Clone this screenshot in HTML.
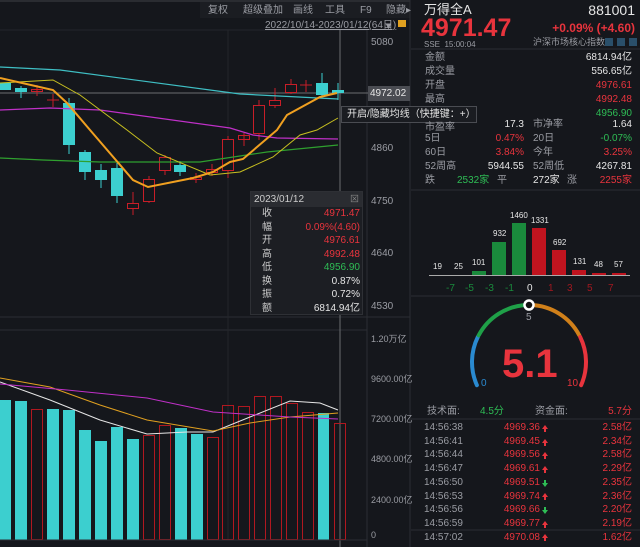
<!DOCTYPE html>
<html><head><meta charset="utf-8"><style>
*{margin:0;padding:0;box-sizing:border-box}
html,body{width:640px;height:547px;overflow:hidden}
body{background:#15171c;position:relative;font-family:"Liberation Sans","Noto Sans CJK SC",sans-serif;color:#ddd}
.a{position:absolute;white-space:nowrap;line-height:12px}
.g{color:#9a9ca3}.r{color:#e8343d}.gr{color:#2ebd55}.w{color:#e6e6e6}
.s10{font-size:10px}.s11{font-size:11px}
.rt{text-align:right}
</style></head><body>
<svg class="a" style="left:0;top:0" width="640" height="547">
<rect x="0" y="0" width="410" height="2" fill="#2a2c31"/>
<rect x="200" y="2" width="210" height="16" fill="#1b1d22"/>
<line x1="0" y1="30" x2="367" y2="30" stroke="#24262b"/>
<line x1="0" y1="317" x2="410" y2="317" stroke="#2c2e33"/>
<line x1="0" y1="330" x2="367" y2="330" stroke="#2c2e33"/>
<line x1="228" y1="30" x2="228" y2="540" stroke="#23252a"/>
<line x1="367" y1="30" x2="367" y2="547" stroke="#2c2e33"/>
<line x1="410" y1="0" x2="410" y2="547" stroke="#2c2e33"/>
<line x1="0" y1="93" x2="368" y2="93" stroke="#6a6c70"/>
<line x1="340" y1="30" x2="340" y2="547" stroke="#6a6c70"/>
<g stroke-width="1">
<rect x="0" y="83" width="11" height="7" fill="#3ccfcf"/>
<line x1="21" y1="86" x2="21" y2="98" stroke="#3ccfcf"/><rect x="15" y="88" width="12" height="4" fill="#3ccfcf"/>
<line x1="37" y1="85" x2="37" y2="96" stroke="#c81e28"/><rect x="31.5" y="89.5" width="11" height="2" fill="none" stroke="#c81e28"/>
<line x1="53" y1="94" x2="53" y2="107" stroke="#c81e28"/><line x1="47" y1="100" x2="59" y2="100" stroke="#c81e28"/>
<line x1="69" y1="98" x2="69" y2="154" stroke="#3ccfcf"/><rect x="63" y="103" width="12" height="42" fill="#3ccfcf"/>
<line x1="85" y1="150" x2="85" y2="180" stroke="#3ccfcf"/><rect x="79" y="152" width="12" height="20" fill="#3ccfcf"/>
<line x1="101" y1="164" x2="101" y2="188" stroke="#3ccfcf"/><rect x="95" y="170" width="12" height="10" fill="#3ccfcf"/>
<line x1="117" y1="163" x2="117" y2="203" stroke="#3ccfcf"/><rect x="111" y="168" width="12" height="28" fill="#3ccfcf"/>
<line x1="133" y1="192" x2="133" y2="215" stroke="#c81e28"/><rect x="127.5" y="203.5" width="11" height="5" fill="#15171c" stroke="#c81e28"/>
<line x1="149" y1="176" x2="149" y2="203" stroke="#c81e28"/><rect x="143.5" y="179.5" width="11" height="22" fill="#15171c" stroke="#c81e28"/>
<line x1="165" y1="155" x2="165" y2="175" stroke="#c81e28"/><rect x="159.5" y="157.5" width="11" height="13" fill="#15171c" stroke="#c81e28"/>
<line x1="180" y1="161" x2="180" y2="176" stroke="#3ccfcf"/><rect x="174" y="165" width="12" height="7" fill="#3ccfcf"/>
<line x1="196" y1="173" x2="196" y2="183" stroke="#c81e28"/><rect x="190.5" y="177.5" width="11" height="2" fill="none" stroke="#c81e28"/>
<line x1="212" y1="164" x2="212" y2="176" stroke="#c81e28"/><rect x="206.5" y="169.5" width="11" height="3" fill="none" stroke="#c81e28"/>
<line x1="228" y1="136" x2="228" y2="178" stroke="#c81e28"/><rect x="222.5" y="139.5" width="11" height="31" fill="#15171c" stroke="#c81e28"/>
<line x1="244" y1="133" x2="244" y2="146" stroke="#c81e28"/><rect x="238.5" y="135.5" width="11" height="4" fill="none" stroke="#c81e28"/>
<line x1="259" y1="100" x2="259" y2="140" stroke="#c81e28"/><rect x="253.5" y="105.5" width="11" height="28" fill="#15171c" stroke="#c81e28"/>
<line x1="275" y1="88" x2="275" y2="108" stroke="#c81e28"/><rect x="269.5" y="100.5" width="11" height="5" fill="#15171c" stroke="#c81e28"/>
<line x1="291" y1="79" x2="291" y2="94" stroke="#c81e28"/><rect x="285.5" y="84.5" width="11" height="8" fill="#15171c" stroke="#c81e28"/>
<line x1="306" y1="80" x2="306" y2="92" stroke="#c81e28"/><line x1="300" y1="85" x2="312" y2="85" stroke="#c81e28"/>
<line x1="322" y1="73" x2="322" y2="97" stroke="#3ccfcf"/><rect x="316" y="83" width="12" height="12" fill="#3ccfcf"/>
<line x1="338" y1="83" x2="338" y2="100" stroke="#3ccfcf"/><rect x="332" y="90" width="12" height="3" fill="#3ccfcf"/>
</g>
<polyline fill="none" stroke="#3fbfc4" stroke-width="1.2" points="0,67 60,70 240,94 338,99"/>
<polyline fill="none" stroke="#c030c8" stroke-width="1.2" points="0,110 50,108 100,110 230,128 253,135 277,138 338,139"/>
<polyline fill="none" stroke="#2fa02f" stroke-width="1.2" points="0,158 43,160 100,162 200,162 267,152 338,145"/>
<polyline fill="none" stroke="#c8c020" stroke-width="1" points="0,83 53,80 80,95 127,130 157,153 210,175 240,172 273,157 300,135 317,130 338,118"/>
<polyline fill="none" stroke="#f0a020" stroke-width="2" points="0,78 53,90 67,103 90,130 133,180 148,187 193,178 213,172 230,162 243,159 277,130 287,115 320,97 337,93"/>
<g fill="#3ccfcf">
<rect x="0" y="400" width="11" height="140"/><rect x="15" y="401" width="12" height="139"/>
<rect x="47" y="409" width="12" height="131"/><rect x="63" y="410" width="12" height="130"/>
<rect x="79" y="430" width="12" height="110"/><rect x="95" y="441" width="12" height="99"/>
<rect x="111" y="427" width="12" height="113"/><rect x="127" y="439" width="12" height="101"/>
<rect x="175" y="428" width="12" height="112"/><rect x="191" y="434" width="12" height="106"/>
<rect x="318" y="413" width="11" height="127"/>
</g>
<g fill="none" stroke="#b01820">
<rect x="31.5" y="409.5" width="11" height="130"/><rect x="143.5" y="435.5" width="11" height="104"/>
<rect x="159.5" y="425.5" width="11" height="114"/><rect x="207.5" y="437.5" width="11" height="102"/>
<rect x="222.5" y="405.5" width="11" height="134"/><rect x="238.5" y="406.5" width="11" height="133"/>
<rect x="254.5" y="396.5" width="11" height="143"/><rect x="270.5" y="396.5" width="11" height="143"/>
<rect x="286.5" y="403.5" width="11" height="136"/><rect x="302.5" y="412.5" width="11" height="127"/>
<rect x="334.5" y="423.5" width="11" height="116"/>
</g>
<polyline fill="none" stroke="#e6e6e6" points="0,382 50,400 100,420 147,434 187,432 213,432 250,417 290,401 320,403 338,410"/>
<polyline fill="none" stroke="#e0a020" points="0,378 50,387 100,405 147,420 213,431 250,423 290,417 338,413"/>
<polyline fill="none" stroke="#c030c8" points="0,384 67,390 147,398 213,412 290,417 338,419"/>
<line x1="0" y1="540" x2="367" y2="540" stroke="#2c2e33"/>
<line x1="411" y1="49" x2="640" y2="49" stroke="#2c2e33"/>
<line x1="411" y1="190" x2="640" y2="190" stroke="#2c2e33"/>
<line x1="411" y1="296" x2="640" y2="296" stroke="#2c2e33"/>
<line x1="411" y1="419" x2="640" y2="419" stroke="#2c2e33"/>
<line x1="411" y1="530" x2="640" y2="530" stroke="#2c2e33"/>
<rect x="472" y="271" width="14" height="4" fill="#1a8a3c"/>
<rect x="492" y="242" width="14" height="33" fill="#1a8a3c"/>
<rect x="512" y="223" width="14" height="52" fill="#1a8a3c"/>
<rect x="532" y="228" width="14" height="47" fill="#c0141f"/>
<rect x="552" y="250" width="14" height="25" fill="#c0141f"/>
<rect x="572" y="270" width="14" height="5" fill="#c0141f"/>
<rect x="592" y="273" width="14" height="2" fill="#c0141f"/>
<rect x="612" y="273" width="14" height="2" fill="#c0141f"/>
<line x1="429" y1="275.5" x2="630" y2="275.5" stroke="#aaa"/>
<g fill="none" stroke-width="4" stroke-linecap="round">
<path d="M476.9,385.2 A57,57 0 0 1 477.8,337" stroke="#2a8ad0"/>
<path d="M478.7,335.3 A57,57 0 0 1 527,305" stroke="#1fa048"/>
<path d="M531,305 A57,57 0 0 1 579.3,335.3" stroke="#d0801a"/>
<path d="M580.2,337 A57,57 0 0 1 581.1,385.2" stroke="#e8343d"/>
</g>
<circle cx="529" cy="305" r="4.5" fill="#111" stroke="#fff" stroke-width="2.5"/>
<g>
<path d="M545,425 l3,4 h-2 v3 h-2 v-3 h-2z" fill="#e8343d"/>
<path d="M545,439 l3,4 h-2 v3 h-2 v-3 h-2z" fill="#e8343d"/>
<path d="M545,452 l3,4 h-2 v3 h-2 v-3 h-2z" fill="#e8343d"/>
<path d="M545,466 l3,4 h-2 v3 h-2 v-3 h-2z" fill="#e8343d"/>
<path d="M545,487 l3,-4 h-2 v-3 h-2 v3 h-2z" fill="#2ebd55"/>
<path d="M545,493 l3,4 h-2 v3 h-2 v-3 h-2z" fill="#e8343d"/>
<path d="M545,514 l3,-4 h-2 v-3 h-2 v3 h-2z" fill="#2ebd55"/>
<path d="M545,521 l3,4 h-2 v3 h-2 v-3 h-2z" fill="#e8343d"/>
<path d="M545,534 l3,4 h-2 v3 h-2 v-3 h-2z" fill="#e8343d"/>
</g>
<rect x="398" y="20" width="8" height="7" fill="#e0a020"/>
<rect x="605" y="38" width="8" height="8" fill="#2a4f6a"/>
<rect x="617" y="38" width="8" height="8" fill="#2a4f6a"/>
<rect x="629" y="38" width="8" height="8" fill="#2a4f6a"/>
</svg>

<div class="a g s10" style="left:208px;top:5px">复权</div>
<div class="a g s10" style="left:243px;top:5px">超级叠加</div>
<div class="a g s10" style="left:293px;top:5px">画线</div>
<div class="a g s10" style="left:325px;top:5px">工具</div>
<div class="a g s10" style="left:360px;top:5px">F9</div>
<div class="a g s10" style="left:386px;top:5px">隐藏▸</div>
<div class="a g s10" style="left:265px;top:20px;text-decoration:underline">2022/10/14-2023/01/12(64日)</div>
<div class="a g" style="left:384px;top:20px;font-size:9px">▼</div>
<div class="a g s10" style="left:371px;top:37px">5080</div>
<div class="a g s10" style="left:371px;top:143px">4860</div>
<div class="a g s10" style="left:371px;top:196px">4750</div>
<div class="a g s10" style="left:371px;top:248px">4640</div>
<div class="a g s10" style="left:371px;top:301px">4530</div>
<div class="a w s10" style="left:368px;top:86px;width:42px;height:15px;background:#4a4c52;padding:2px 2px">4972.02</div>
<div class="a w s10" style="left:341px;top:106px;width:136px;height:17px;background:#1a1c21;border:1px solid #4a4c52;padding:2px 5px">开启/隐藏均线（快捷键：+）</div>
<div class="a g" style="left:371px;top:333px;font-size:9px">1.20万亿</div>
<div class="a g" style="left:371px;top:373px;font-size:9px">9600.00亿</div>
<div class="a g" style="left:371px;top:413px;font-size:9px">7200.00亿</div>
<div class="a g" style="left:371px;top:453px;font-size:9px">4800.00亿</div>
<div class="a g" style="left:371px;top:494px;font-size:9px">2400.00亿</div>
<div class="a g" style="left:371px;top:529px;font-size:9px">0</div>
<div class="a" style="left:250px;top:191px;width:113px;height:124px;background:#1c1e23;border:1px solid #2e3035;white-space:normal;line-height:normal">
<div style="height:15px;background:#2a2c31;font-size:10px;line-height:13px;color:#ccc;padding:1px 3px;position:relative">2023/01/12<span style="position:absolute;right:3px;color:#888;font-size:9px">⊠</span></div>
<div class="s10" style="line-height:13.5px">
<div style="display:flex"><span style="width:32px;text-align:center;color:#ccc">收</span><span class="r" style="flex:1;text-align:right;padding-right:2px">4971.47</span></div>
<div style="display:flex"><span style="width:32px;text-align:center;color:#ccc">幅</span><span class="r" style="flex:1;text-align:right;padding-right:2px">0.09%(4.60)</span></div>
<div style="display:flex"><span style="width:32px;text-align:center;color:#ccc">开</span><span class="r" style="flex:1;text-align:right;padding-right:2px">4976.61</span></div>
<div style="display:flex"><span style="width:32px;text-align:center;color:#ccc">高</span><span class="r" style="flex:1;text-align:right;padding-right:2px">4992.48</span></div>
<div style="display:flex"><span style="width:32px;text-align:center;color:#ccc">低</span><span class="gr" style="flex:1;text-align:right;padding-right:2px">4956.90</span></div>
<div style="display:flex"><span style="width:32px;text-align:center;color:#ccc">换</span><span class="w" style="flex:1;text-align:right;padding-right:2px">0.87%</span></div>
<div style="display:flex"><span style="width:32px;text-align:center;color:#ccc">振</span><span class="w" style="flex:1;text-align:right;padding-right:2px">0.72%</span></div>
<div style="display:flex"><span style="width:32px;text-align:center;color:#ccc">额</span><span class="w" style="flex:1;text-align:right;padding-right:2px">6814.94亿</span></div>
</div></div>

<div class="a w" style="left:424px;top:2px;font-size:13px;line-height:15px">万得全A</div>
<div class="a w" style="right:5px;top:2px;font-size:14px;line-height:16px">881001</div>
<div class="a r" style="left:421px;top:17px;font-size:25px;line-height:22px;font-weight:bold">4971.47</div>
<div class="a r" style="right:5px;top:22px;font-size:12px;line-height:13px;font-weight:bold">+0.09% (+4.60)</div>
<div class="a g" style="left:424px;top:40px;font-size:8px;line-height:9px">SSE&nbsp; 15:00:04</div>
<div class="a g" style="left:533px;top:37px;font-size:9px;line-height:11px">沪深市场核心指数</div>

<div class="s10">
<div class="a g" style="left:425px;top:52px">金额</div><div class="a w" style="right:8px;top:52px">6814.94亿</div>
<div class="a g" style="left:425px;top:66px">成交量</div><div class="a w" style="right:8px;top:66px">556.65亿</div>
<div class="a g" style="left:425px;top:80px">开盘</div><div class="a r" style="right:8px;top:80px">4976.61</div>
<div class="a g" style="left:425px;top:94px">最高</div><div class="a r" style="right:8px;top:94px">4992.48</div>
<div class="a gr" style="right:8px;top:108px">4956.90</div>
<div class="a g" style="left:425px;top:122px">市盈率</div><div class="a w" style="left:480px;width:44px;top:119px;text-align:right">17.3</div>
<div class="a g" style="left:533px;top:119px">市净率</div><div class="a w" style="right:8px;top:119px">1.64</div>
<div class="a g" style="left:425px;top:133px">5日</div><div class="a r" style="left:480px;width:44px;top:133px;text-align:right">0.47%</div>
<div class="a g" style="left:533px;top:133px">20日</div><div class="a gr" style="right:8px;top:133px">-0.07%</div>
<div class="a g" style="left:425px;top:147px">60日</div><div class="a r" style="left:480px;width:44px;top:147px;text-align:right">3.84%</div>
<div class="a g" style="left:533px;top:147px">今年</div><div class="a r" style="right:8px;top:147px">3.25%</div>
<div class="a g" style="left:425px;top:161px">52周高</div><div class="a w" style="left:470px;width:54px;top:161px;text-align:right">5944.55</div>
<div class="a g" style="left:533px;top:161px">52周低</div><div class="a w" style="right:8px;top:161px">4267.81</div>
<div class="a g" style="left:425px;top:175px">跌</div><div class="a gr" style="left:457px;top:175px">2532家</div>
<div class="a g" style="left:497px;top:175px">平</div><div class="a w" style="left:533px;top:175px">272家</div>
<div class="a g" style="left:567px;top:175px">涨</div><div class="a r" style="right:8px;top:175px">2255家</div>
</div>

<div class="w" style="font-size:8px">
<span class="a" style="left:433px;top:261px">19</span><span class="a" style="left:454px;top:261px">25</span>
<span class="a" style="left:472px;top:257px">101</span><span class="a" style="left:493px;top:228px">932</span>
<span class="a" style="left:510px;top:210px">1460</span><span class="a" style="left:531px;top:215px">1331</span>
<span class="a" style="left:553px;top:237px">692</span><span class="a" style="left:573px;top:256px">131</span>
<span class="a" style="left:594px;top:259px">48</span><span class="a" style="left:614px;top:259px">57</span>
</div>
<div class="s10">
<span class="a" style="left:446px;top:283px;color:#1a8a3c">-7</span><span class="a" style="left:465px;top:283px;color:#1a8a3c">-5</span>
<span class="a" style="left:485px;top:283px;color:#1a8a3c">-3</span><span class="a" style="left:505px;top:283px;color:#1a8a3c">-1</span>
<span class="a w" style="left:527px;top:283px">0</span><span class="a" style="left:548px;top:283px;color:#a01820">1</span>
<span class="a" style="left:567px;top:283px;color:#a01820">3</span><span class="a" style="left:587px;top:283px;color:#a01820">5</span>
<span class="a" style="left:608px;top:283px;color:#a01820">7</span>
</div>
<div class="a g s10" style="left:526px;top:312px">5</div>
<div class="a r" style="left:502px;top:343px;font-size:40px;font-weight:bold;line-height:42px">5.1</div>
<div class="a s10" style="left:481px;top:378px;color:#2a8ad0">0</div>
<div class="a r s10" style="left:567px;top:378px">10</div>
<div class="a g s10" style="left:427px;top:406px">技术面:</div>
<div class="a gr s10" style="left:480px;top:406px">4.5分</div>
<div class="a g s10" style="left:535px;top:406px">资金面:</div>
<div class="a r s10" style="right:8px;top:406px">5.7分</div>
<div class="s10">
<div class="a g" style="left:424px;top:421px;line-height:13.7px">14:56:38<br>14:56:41<br>14:56:44<br>14:56:47<br>14:56:50<br>14:56:53<br>14:56:56<br>14:56:59<br>14:57:02</div>
<div class="a r rt" style="left:490px;width:50px;top:421px;line-height:13.7px">4969.36<br>4969.45<br>4969.56<br>4969.61<br>4969.51<br>4969.74<br>4969.66<br>4969.77<br>4970.08</div>
<div class="a r rt" style="right:8px;top:421px;line-height:13.7px">2.58亿<br>2.34亿<br>2.58亿<br>2.29亿<br>2.35亿<br>2.36亿<br>2.20亿<br>2.19亿<br>1.62亿</div>
</div>
</body></html>
